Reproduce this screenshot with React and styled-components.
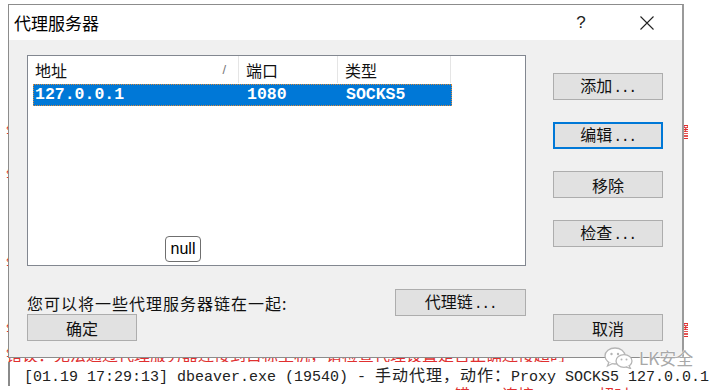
import React from "react";
import styled, { createGlobalStyle } from "styled-components";

const Global = createGlobalStyle`
  html, body { margin: 0; padding: 0; background: #fff; }
  body { font-family: "Noto Sans CJK SC", "Liberation Sans", sans-serif; }
  * { box-sizing: border-box; }
`;

const Screen = styled.div`
  position: relative;
  width: 715px;
  height: 390px;
  overflow: hidden;
  background: #fff;
`;

const Backdrop = styled.div`
  position: relative;
  z-index: 0;
  display: flex;
  flex-direction: column;
  padding-top: 10px;
`;

const BgLine = styled.div`
  width: 688px;
  height: 22px;
  flex: none;
  line-height: ${(p) => p.$lh || 22}px;
  padding-left: 6px;
  padding-top: ${(p) => p.$shift || 0}px;
  overflow: hidden;
  white-space: nowrap;
  font-family: "Noto Sans CJK SC", sans-serif;
  font-size: 16px;
  color: #e03030;
`;

const LogLine = styled.div`
  height: 24px;
  flex: none;
  line-height: 24px;
  margin-left: 8px;
  padding-left: 14px;
  border-left: 2px solid #8a8a8a;
  white-space: nowrap;
  font-family: "Liberation Mono", monospace;
  font-size: 15px;
  color: #222;
`;

const Cjk = styled.span`
  font-family: "Noto Sans CJK SC", sans-serif;
  font-size: 16px;
  letter-spacing: 1px;
`;

const Dialog = styled.div`
  position: absolute;
  z-index: 1;
  left: 8px;
  top: 4px;
  width: 676px;
  height: 354px;
  display: flex;
  flex-direction: column;
  border: 1px solid #8c8c8c;
  border-right: 2px solid #9a9a9a;
  background: #f0f0f0;
`;

const TitleBar = styled.div`
  height: 35px;
  flex: none;
  display: flex;
  align-items: center;
  background: #fff;
  padding-left: 5px;
`;

const Title = styled.div`
  flex: 1;
  font-size: 17px;
  line-height: 20px;
  color: #000;
`;

const HelpMark = styled.div`
  width: 20px;
  margin-right: 48px;
  font-family: "Liberation Sans", sans-serif;
  font-size: 17px;
  color: #222;
  text-align: center;
`;

const CloseIcon = styled.svg`
  width: 16px;
  height: 16px;
  margin-right: 27px;
`;

const Body = styled.div`
  flex: none;
  height: 317px;
  display: flex;
  gap: 27px;
  padding: 15px 19px 16px 18px;
  background: #f0f0f0;
`;

const LeftCol = styled.div`
  width: 499px;
  display: flex;
  flex-direction: column;
`;

const RightCol = styled.div`
  width: 110px;
  display: flex;
  flex-direction: column;
  gap: 22px;
  padding-top: 18px;
`;

const ListBox = styled.div`
  position: relative;
  height: 211px;
  flex: none;
  background: #fff;
  border: 1px solid #828790;
`;

const Header = styled.div`
  display: flex;
  height: 27px;
`;

const HeadCell = styled.div`
  width: ${(p) => p.$w}px;
  display: flex;
  align-items: center;
  padding-left: 7px;
  border-right: 1px solid #e5e5e5;
  font-size: 16px;
  color: #111;
`;

const SortMark = styled.span`
  margin-left: auto;
  margin-right: 12px;
  font-family: "Liberation Sans", sans-serif;
  font-size: 13px;
  color: #777;
`;

const Row = styled.div`
  display: flex;
  height: 22px;
  margin: 1px 0 0 5px;
  width: 419px;
  background: #0078d7;
  border: 1px dotted #d9893a;
`;

const Cell = styled.div`
  width: ${(p) => p.$w}px;
  padding-left: 1px;
  font-family: "Liberation Mono", monospace;
  font-weight: bold;
  font-size: 16.5px;
  line-height: 20px;
  color: #fff;
`;

const NullBadge = styled.div`
  position: absolute;
  left: 137px;
  top: 180px;
  width: 36px;
  height: 26px;
  border: 1px solid #6f6f6f;
  border-radius: 4px;
  background: #fff;
  font-family: "Liberation Sans", sans-serif;
  font-size: 16px;
  line-height: 24px;
  text-align: center;
  color: #000;
`;

const ChainRow = styled.div`
  display: flex;
  align-items: center;
  justify-content: space-between;
  margin-top: 23px;
  height: 27px;
  flex: none;
`;

const Label = styled.div`
  font-size: 16px;
  letter-spacing: 1px;
  line-height: 20px;
  color: #111;
`;

const Button = styled.div`
  width: ${(p) => p.$w || 110}px;
  height: 27px;
  flex: none;
  display: flex;
  align-items: center;
  justify-content: center;
  background: #e1e1e1;
  border: ${(p) => (p.$focus ? "2px solid #0078d7" : "1px solid #adadad")};
  margin-top: ${(p) => p.$mt || 0};
`;

const BtnText = styled.span`
  font-size: 16px;
  line-height: 20px;
  color: #111;
  white-space: nowrap;
`;

const Dots = styled.span`
  font-family: "Liberation Mono", monospace;
  font-size: 15px;
  letter-spacing: -1.5px;
  margin-left: 1px;
`;

const Watermark = styled.div`
  position: absolute;
  z-index: 2;
  left: 604px;
  top: 347px;
  display: flex;
  align-items: center;
  gap: 5px;
`;

const WmText = styled.span`
  font-family: "Noto Sans CJK SC", sans-serif;
  font-size: 17px;
  line-height: 20px;
  color: #a8a8a8;
  text-shadow: 0 0 2px #fff, 0 0 1px #fff;
`;

const LONG = "错误信息：连接被拒绝，正在尝试重新连接到代理服务器链接远程主机失败错误，请检查网络设置后再试一次";

const bgLines = [
  "", "", "", "", "",
  LONG,
  "",
  "错误信息：连接被拒绝",
  "", "", "",
  "错误信息：连接被拒绝",
  "", "",
  LONG,
];

const SP = "　";

function Btn({ label, dots, ...rest }) {
  return (
    <Button {...rest}>
      <BtnText>
        {label}
        {dots && <Dots>...</Dots>}
      </BtnText>
    </Button>
  );
}

export default function App() {
  return (
    <>
      <Global />
      <Screen>
        <Backdrop>
          {bgLines.map((t, i) => (
            <BgLine key={i}>{t}</BgLine>
          ))}
          <BgLine $shift={3}>错误：无法通过代理服务器连接到目标主机，请检查代理设置是否正确连接超时</BgLine>
          <LogLine>
            [01.19 17:29:13] dbeaver.exe (19540) - <Cjk>手动代理，动作：</Cjk>Proxy SOCKS5 127.0.0.1
          </LogLine>
          <BgLine $lh={17}>
            {SP.repeat(28)}错{SP.repeat(2)}连接{SP.repeat(4)}超时
          </BgLine>
        </Backdrop>

        <Dialog>
          <TitleBar>
            <Title>代理服务器</Title>
            <HelpMark>?</HelpMark>
            <CloseIcon viewBox="0 0 16 16">
              <path d="M1.5 1.5 L14.5 14.5 M14.5 1.5 L1.5 14.5" stroke="#222" strokeWidth="1.1" fill="none" />
            </CloseIcon>
          </TitleBar>
          <Body>
            <LeftCol>
              <ListBox>
                <Header>
                  <HeadCell $w={211}>
                    地址<SortMark>/</SortMark>
                  </HeadCell>
                  <HeadCell $w={99}>端口</HeadCell>
                  <HeadCell $w={113}>类型</HeadCell>
                </Header>
                <Row>
                  <Cell $w={212}>127.0.0.1</Cell>
                  <Cell $w={99}>1080</Cell>
                  <Cell $w={106}>SOCKS5</Cell>
                </Row>
                <NullBadge>null</NullBadge>
              </ListBox>
              <ChainRow>
                <Label>您可以将一些代理服务器链在一起:</Label>
                <Btn $w={131} label="代理链" dots />
              </ChainRow>
              <Btn $mt="-2px" label="确定" />
            </LeftCol>
            <RightCol>
              <Btn label="添加" dots />
              <Btn $focus label="编辑" dots />
              <Btn label="移除" />
              <Btn label="检查" dots />
              <Btn $mt="auto" label="取消" />
            </RightCol>
          </Body>
        </Dialog>

        <Watermark>
          <svg width="30" height="22" viewBox="0 0 30 22">
            <ellipse cx="11" cy="9" rx="10" ry="8" fill="#fff" stroke="#b5b5b5" strokeWidth="1.3" />
            <path d="M5 15 L3.5 19 L8.5 16.5" fill="#fff" stroke="#b5b5b5" strokeWidth="1.3" />
            <circle cx="7.5" cy="7" r="1.2" fill="#b5b5b5" />
            <circle cx="14" cy="7" r="1.2" fill="#b5b5b5" />
            <ellipse cx="20" cy="14" rx="8" ry="6.3" fill="#fff" stroke="#b5b5b5" strokeWidth="1.3" />
            <path d="M25 18.5 L26.5 21.5 L22 19.8" fill="#fff" stroke="#b5b5b5" strokeWidth="1.3" />
            <circle cx="17.5" cy="12.5" r="1" fill="#b5b5b5" />
            <circle cx="22.5" cy="12.5" r="1" fill="#b5b5b5" />
          </svg>
          <WmText>LK安全</WmText>
        </Watermark>
      </Screen>
    </>
  );
}
